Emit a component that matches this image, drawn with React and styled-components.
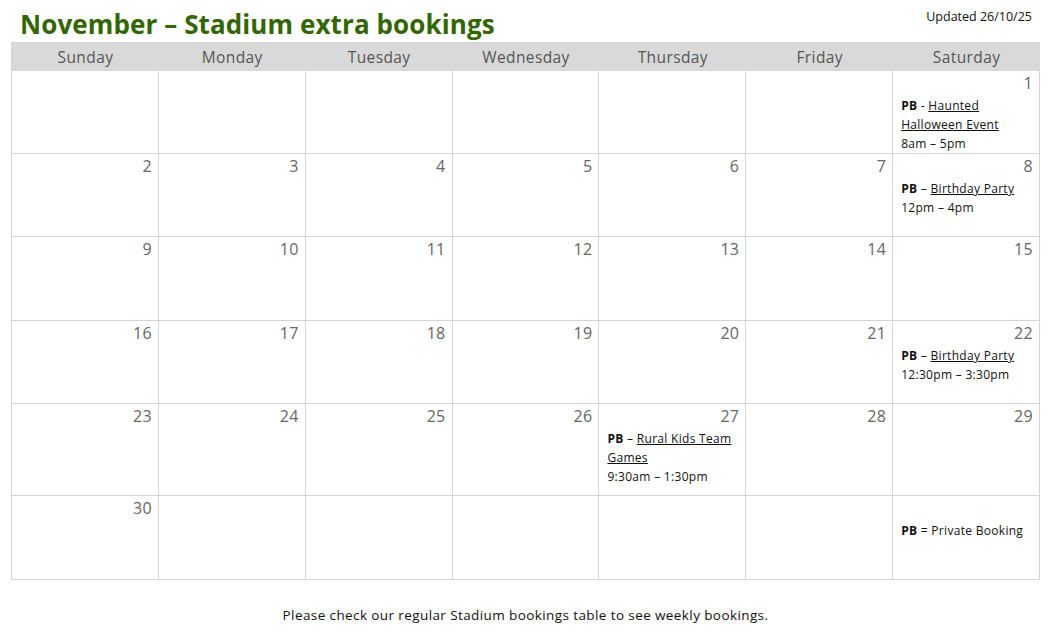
import React from "react";
import styled, { createGlobalStyle } from "styled-components";

const Global = createGlobalStyle`
  html, body { margin: 0; padding: 0; background: #fff; }
  body { font-family: "Open Sans", "Noto Sans", sans-serif; color: #111; }
`;

const Page = styled.div`
  width: 1061px;
  padding: 0 21px 0 11px;
  box-sizing: border-box;
`;

const TopBar = styled.div`
  display: flex;
  justify-content: space-between;
  align-items: flex-start;
  height: 42px;
`;

const Title = styled.h1`
  margin: 6px 0 0 9px;
  font-size: 26px;
  line-height: 36px;
  font-weight: 700;
  color: #336600;
  letter-spacing: 0.1px;
`;

const Updated = styled.div`
  margin-top: 8px;
  margin-right: 8px;
  font-size: 12.5px;
  line-height: 18px;
  color: #111;
`;

const Calendar = styled.div`
  display: grid;
  grid-template-columns: repeat(7, 1fr);
  border-left: 1px solid #d4d4d4;
  border-top: 1px solid #d4d4d4;
`;

const HeadCell = styled.div`
  background: #d9d9d9;
  height: 28px;
  display: flex;
  align-items: center;
  justify-content: center;
  font-size: 15.5px;
  letter-spacing: 0.4px;
  color: #555;
`;

const Cell = styled.div`
  border-right: 1px solid #d4d4d4;
  border-bottom: 1px solid #d4d4d4;
  height: ${(p) => p.$h}px;
  padding: 2px 6px 0 8px;
  box-sizing: border-box;
  display: flex;
  flex-direction: column;
  overflow: hidden;
`;

const DayNum = styled.div`
  text-align: right;
  font-size: 16px;
  line-height: 20px;
  min-height: 20px;
  letter-spacing: 0.3px;
  color: #666;
`;

const Event = styled.div`
  margin-top: 3px;
  font-size: 12px;
  line-height: 19px;
  letter-spacing: 0.3px;
  color: #111;
`;

const Bold = styled.b`
  font-weight: 700;
`;

const Link = styled.span`
  text-decoration: underline;
`;

const Footer = styled.p`
  margin: 26px 0 0;
  text-align: center;
  font-size: 13.5px;
  line-height: 18px;
  letter-spacing: 0.4px;
  color: #111;
`;

const days = ["Sunday", "Monday", "Tuesday", "Wednesday", "Thursday", "Friday", "Saturday"];

const events = {
  1: { sep: "-", title: "Haunted Halloween Event", time: "8am – 5pm" },
  8: { sep: "–", title: "Birthday Party", time: "12pm – 4pm" },
  22: { sep: "–", title: "Birthday Party", time: "12:30pm – 3:30pm" },
  27: { sep: "–", title: "Rural Kids Team Games", time: "9:30am – 1:30pm" },
};

const rowHeights = [83, 83, 84, 83, 92, 84];

export default function App() {
  const cells = [];
  for (let i = 0; i < 42; i++) {
    const day = i - 5;
    const row = Math.floor(i / 7);
    const h = rowHeights[row];
    if (row === 5 && i % 7 === 6) {
      cells.push(
        <Cell key={i} $h={h}>
          <DayNum />
          <Event>
            <Bold>PB</Bold> = Private Booking
          </Event>
        </Cell>
      );
      continue;
    }
    const valid = day >= 1 && day <= 30;
    const ev = events[day];
    cells.push(
      <Cell key={i} $h={h}>
        {valid && <DayNum>{day}</DayNum>}
        {ev && (
          <Event>
            <Bold>PB</Bold> {ev.sep} <Link>{ev.title}</Link>
            <br />
            {ev.time}
          </Event>
        )}
      </Cell>
    );
  }
  return (
    <>
      <Global />
      <Page>
        <TopBar>
          <Title>November – Stadium extra bookings</Title>
          <Updated>Updated 26/10/25</Updated>
        </TopBar>
        <Calendar>
          {days.map((d) => (
            <HeadCell key={d}>{d}</HeadCell>
          ))}
          {cells}
        </Calendar>
        <Footer>Please check our regular Stadium bookings table to see weekly bookings.</Footer>
      </Page>
    </>
  );
}
